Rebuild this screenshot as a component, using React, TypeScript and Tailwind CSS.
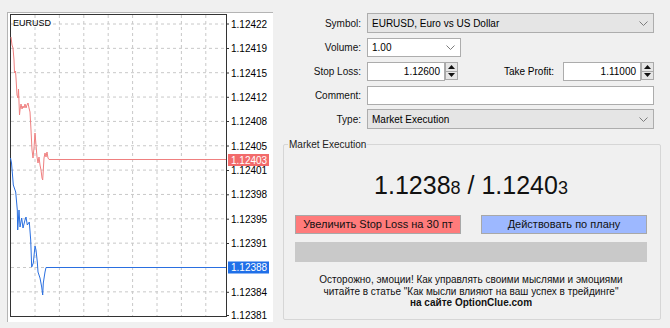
import type { ReactNode } from "react";

const font = { fontFamily: '"Liberation Sans", Arial, sans-serif' };

const gridY = Array.from({ length: 12 }, (_, i) => 24 + i * 24.35);
const gridX = Array.from({ length: 8 }, (_, i) => 35 + i * 24.4);

const axisLabels: [number, string][] = [
  [24, "1.12422"],
  [48.5, "1.12419"],
  [73, "1.12415"],
  [97.3, "1.12412"],
  [121.5, "1.12408"],
  [146, "1.12405"],
  [170.5, "1.12401"],
  [194.8, "1.12398"],
  [219.2, "1.12395"],
  [243.5, "1.12391"],
  [292.3, "1.12384"],
  [315.5, "1.12381"],
];

const askLine =
  "11,37 12,45 13,48 14,60 14.5,73 15.5,71 16,78 17,95 18,98 18.5,89 19.5,115 20,110 21,104 22,109 23,106 24,108 25,104 26,108 27,105 28,103 29,108 30,112 31,130 32,150 33,158 34,148 35,133 36,145 37,157 38,163 39,157 40,165 41,170 42,178 42.7,180 44,158 45,153 46,157 47,152 48,158 49,159.5 226,159.5";

const bidLine =
  "10.5,158 11.5,163 12.5,175 13.3,185 15.7,192 17.3,210 17.7,230 19,210 20,227 21.7,218 23,228 25,220 26,217 27.3,225 29.3,222 30.7,240 31.7,267 33.3,263 35,246 36,250 37.3,262 38,272 40,278 41.7,287 42.7,295 43.3,283 45,272 46,267.5 226,267.5";

function PriceChart() {
  return (
    <div className="w-[266px] h-[310px] bg-white border-l border-t border-[#b4b4b4]">
      <svg width="265" height="309" viewBox="8 13 265 309" style={font}>
        {gridY.map((y) => (
          <line key={"h" + y} x1="11" x2="226" y1={y} y2={y} stroke="#c8c8c8" strokeDasharray="3 3" />
        ))}
        {gridX.map((x) => (
          <line key={"v" + x} x1={x} x2={x} y1="15" y2="316" stroke="#c8c8c8" strokeDasharray="3 3" />
        ))}
        <rect x="10.5" y="14.5" width="216" height="302" fill="none" stroke="#333" />
        <text x="13" y="26" fontSize="9" fill="#000">EURUSD</text>
        {axisLabels.map(([y, t]) => (
          <g key={t}>
            <line x1="226" x2="229" y1={y} y2={y} stroke="#333" />
            <text x="231" y={y + 3.6} fontSize="10" fill="#000">{t}</text>
          </g>
        ))}
        <polyline points={askLine} fill="none" stroke="#ef8080" strokeWidth="1" />
        <polyline points={bidLine} fill="none" stroke="#2a6fe0" strokeWidth="1" />
        <rect x="228" y="154" width="41" height="12" fill="#f26b6b" />
        <text x="231" y="163.5" fontSize="10" fill="#fff">1.12403</text>
        <rect x="228" y="261.5" width="41" height="12" fill="#1f6fe8" />
        <text x="231" y="271" fontSize="10" fill="#fff">1.12388</text>
      </svg>
    </div>
  );
}

function Chevron() {
  return (
    <svg width="9" height="5" viewBox="0 0 9 5" className="shrink-0">
      <path d="M0.5 0.5 L4.5 4.5 L8.5 0.5" fill="none" stroke="#7c7c7c" />
    </svg>
  );
}

function Spinner() {
  return (
    <div className="w-[13px] h-[18px] flex flex-col border border-[#a9a9a9] bg-[#e6e6e6]">
      <div className="flex-1 flex items-center justify-center border-b border-[#a9a9a9]">
        <svg width="7" height="4" viewBox="0 0 7 4">
          <path d="M0 4 L3.5 0 L7 4 Z" fill="#111" />
        </svg>
      </div>
      <div className="flex-1 flex items-center justify-center">
        <svg width="7" height="4" viewBox="0 0 7 4">
          <path d="M0 0 L3.5 4 L7 0 Z" fill="#111" />
        </svg>
      </div>
    </div>
  );
}

function Row({ label, children }: { label: string; children: ReactNode }) {
  return (
    <div className="flex items-center h-[20px]">
      <div className="w-[78px] text-right text-[#111]">{label}</div>
      <div className="ml-[6px] flex items-center w-[287px]">{children}</div>
    </div>
  );
}

function NumberField({ value }: { value: string }) {
  return (
    <div className="flex items-center">
      <div className="w-[78px] h-[19px] border border-[#acacac] bg-white flex items-center justify-end pr-[4px]">
        {value}
      </div>
      <Spinner />
    </div>
  );
}

export default function App() {
  return (
    <div className="w-[670px] h-[328px] bg-[#f0f0f0] flex pt-[12px] pl-[7px] text-[10px] text-black" style={font}>
      <PriceChart />
      <div className="ml-[10px] w-[378px] flex flex-col pt-[1px]">
        <div className="flex flex-col gap-[4px]">
          <Row label="Symbol:">
            <div className="w-[287px] h-[20px] border border-[#adadad] bg-[#e5e5e5] flex items-center justify-between pl-[4px] pr-[5px]">
              <span>EURUSD, Euro vs US Dollar</span>
              <Chevron />
            </div>
          </Row>
          <Row label="Volume:">
            <div className="w-[94px] h-[19px] border border-[#adadad] bg-white flex items-center justify-between pl-[4px] pr-[5px]">
              <span>1.00</span>
              <Chevron />
            </div>
          </Row>
          <Row label="Stop Loss:">
            <NumberField value="1.12600" />
            <div className="ml-auto text-right pr-[9px]">Take Profit:</div>
            <NumberField value="1.11000" />
          </Row>
          <Row label="Comment:">
            <div className="w-[287px] h-[19px] border border-[#acacac] bg-white" />
          </Row>
          <Row label="Type:">
            <div className="w-[287px] h-[20px] border border-[#adadad] bg-[#e5e5e5] flex items-center justify-between pl-[4px] pr-[5px]">
              <span>Market Execution</span>
              <Chevron />
            </div>
          </Row>
        </div>

        <div className="relative mt-[15px] h-[176px] border border-[#d6d6d6] rounded-[2px] pl-[11px] pr-[13px] pt-[26px] flex flex-col">
          <span className="absolute -top-[7px] left-[4px] px-[1px] bg-[#f0f0f0] leading-[13px] text-[#222]">
            Market Execution
          </span>
          <div className="h-[28px] flex items-baseline justify-center text-[#111] leading-[28px]">
            <span className="text-[25px]">1.1238</span>
            <span className="text-[18px]">8</span>
            <span className="text-[25px]">&nbsp;/&nbsp;</span>
            <span className="text-[25px]">1.1240</span>
            <span className="text-[18px]">3</span>
          </div>
          <div className="mt-[16px] flex justify-between">
            <button className="w-[166px] h-[19px] bg-[#ff7b7b] border border-[#a8a8a8] text-[11px] leading-none text-[#111]">
              Увеличить Stop Loss на 30 пт
            </button>
            <button className="w-[166px] h-[19px] bg-[#9db8ff] border border-[#a8a8a8] text-[11px] leading-none text-[#111]">
              Действовать по плану
            </button>
          </div>
          <div className="mt-[8px] h-[20px] bg-[#c9c9c9]" />
          <div className="mt-[12px] flex flex-col items-center leading-[11.5px] text-[10px] text-[#111]">
            <span>Осторожно, эмоции! Как управлять своими мыслями и эмоциями</span>
            <span>читайте в статье "Как мысли влияют на ваш успех в трейдинге"</span>
            <span className="font-bold">на сайте OptionClue.com</span>
          </div>
        </div>
      </div>
    </div>
  );
}
